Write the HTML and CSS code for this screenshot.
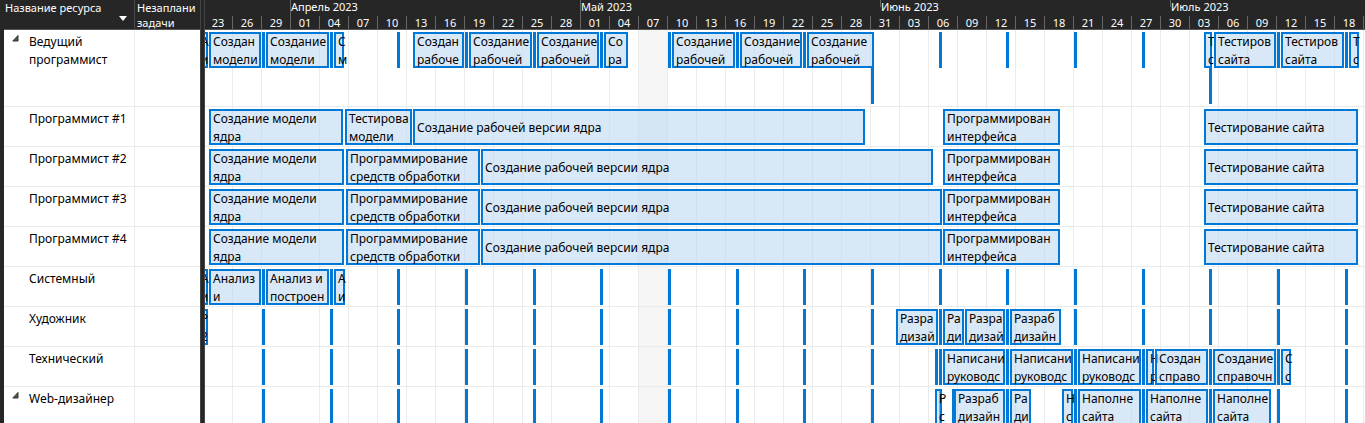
FILE: index.html
```html
<!DOCTYPE html>
<html lang="ru">
<head>
<meta charset="utf-8">
<title>Визуальный оптимизатор ресурсов</title>
<link rel="stylesheet" href="styles.css">
</head>
<body>
<main class="planner">
  <table class="sheet">
    <thead>
      <tr>
        <th class="col-name" scope="col">
          <div class="col-head"><span>Название ресурса</span><button class="sort" type="button" aria-label="Сортировка"><svg viewBox="0 0 8 5"><path d="M0 0h8L4 5z"/></svg></button></div>
        </th>
        <th class="col-free" scope="col"><div class="col-head">Незаплани<br>задачи</div></th>
      </tr>
    </thead>
    <tbody>
      <tr class="tall"><td><button class="toggle" type="button" aria-label="Свернуть"><svg viewBox="0 0 7 7"><path d="M6 .5v5.500H.8z"/></svg></button>Ведущий<br>программист</td><td></td></tr>
      <tr><td>Программист #1</td><td></td></tr>
      <tr><td>Программист #2</td><td></td></tr>
      <tr><td>Программист #3</td><td></td></tr>
      <tr><td>Программист #4</td><td></td></tr>
      <tr><td>Системный</td><td></td></tr>
      <tr><td>Художник</td><td></td></tr>
      <tr><td>Технический</td><td></td></tr>
      <tr><td><button class="toggle" type="button" aria-label="Свернуть"><svg viewBox="0 0 7 7"><path d="M6 .5v5.500H.8z"/></svg></button>Web-дизайнер</td><td></td></tr>
    </tbody>
  </table>
  <div class="splitter"></div>
  <section class="timeline">
    <header class="scale">
      <div class="months"></div>
      <div class="days"></div>
    </header>
    <div class="lanes"><div class="grid"></div></div>
  </section>
</main>
<script src="app.js"></script>
</body>
</html>
```
FILE: styles.css
```css
* { box-sizing: border-box; }

body {
  margin: 0;
  height: 100vh;
  overflow: hidden;
  background: #fff;
  color: #000;
  font: 12px/18px "Noto Sans", sans-serif;
}

button {
  border: 0;
  padding: 0;
  background: none;
  cursor: pointer;
}

button svg { display: block; }

.planner {
  display: flex;
  height: 100%;
  overflow: hidden;
  border-left: 4px solid #262626;
}

/* Resource sheet */
.sheet {
  flex: none;
  align-self: flex-start;
  width: 196px;
  table-layout: fixed;
  border-collapse: separate;
  border-spacing: 0;
}

.sheet th {
  padding: 0 1px;
  background: #262626;
  color: #fff;
  border-bottom: 1px solid #555;
  font-size: 11px;
  font-weight: 400;
  line-height: 15px;
  text-align: left;
  vertical-align: top;
  white-space: nowrap;
}

.sheet .col-name { width: 131px; border-right: 1px solid #4a4a4a; }
.sheet .col-free { padding-left: 2px; }

.col-head {
  display: flow-root;
  height: 29px;
}

.col-name .col-head {
  display: flex;
  justify-content: space-between;
}

.sort {
  align-self: flex-end;
  width: 8px;
  margin: 0 6px 8px 0;
}

.sort svg { width: 8px; height: 5px; fill: #fff; }

.sheet td {
  position: relative;
  height: 40px;
  padding: 3px 0 0 25px;
  border-bottom: 1px solid #ebebeb;
  vertical-align: top;
  white-space: nowrap;
}

.sheet td:first-child { border-right: 1px solid #ebebeb; }
.sheet .tall td { height: 77px; }

.toggle {
  position: absolute;
  top: 5px;
  left: 8px;
}

.toggle svg { width: 7px; height: 7px; fill: #555; stroke: #333; }

.splitter {
  flex: none;
  width: 5px;
  background: #262626;
  border-left: 1px solid #444;
  border-right: 1px solid #444;
  cursor: col-resize;
}

/* Time scale */
.timeline {
  flex: 1;
  min-width: 0;
  overflow: hidden;
}

.scale {
  height: 30px;
  background: #262626;
  color: #fff;
  border-bottom: 1px solid #555;
  font-size: 11px;
}

.months {
  position: relative;
  height: 16px;
}

.month {
  position: absolute;
  top: 0;
  height: 16px;
  line-height: 13px;
  white-space: nowrap;
  border-left: 1px solid #666;
}

.month.offset { height: 7px; }

.days {
  display: flex;
  margin-left: -2px;
}

.day {
  flex: none;
  width: 29px;
  height: 13px;
  border-left: 1px solid #666;
  line-height: 13px;
  text-align: center;
}

/* Assignments */
.lanes { position: relative; }

.grid {
  position: absolute;
  inset: 0;
  display: flex;
  margin-left: -2px;
}

.grid-cell {
  flex: none;
  width: 29px;
  border-left: 1px solid #ebebeb;
}

.grid-cell.current { background: #f5f5f5; }
.grid-cell.month-start { border-left-color: transparent; }

.lane {
  position: relative;
  height: 40px;
  border-bottom: 1px solid #ebebeb;
}

.lane.tall { height: 77px; }

.task, .mark {
  position: absolute;
  top: 2px;
  height: 36px;
}

.task {
  display: flex;
  align-items: center;
  padding: 2px 0 0 2px;
  border: 2px solid #0078d7;
  background: rgba(192, 217, 242, 0.6);
  white-space: nowrap;
}

.mark { width: 3px; background: #0078d7; }
.mark.second { top: 38px; }
```
FILE: app.js
```js
const ORIGIN = 205;
const WEEKS = [262, 330, 397, 465, 533, 600, 668, 736, 803, 871, 939, 1006, 1074, 1142, 1209, 1277, 1345];
const MONTHS = [[290, 'Апрель 2023'], [580, 'Май 2023'], [880, 'Июнь 2023', 'offset'], [1170, 'Июль 2023', 'offset']];
const DAYS = ['23', '26', '29', '01', '04', '07', '10', '13', '16', '19', '22', '25', '28', '01', '04', '07', '10', '13', '16', '19',
  '22', '25', '28', '31', '03', '06', '09', '12', '15', '18', '21', '24', '27', '30', '03', '06', '09', '12', '15', '18', ''];

const UI = [943, 1060, 'Программирован\nинтерфейса'];
const TEST = [1204, 1358, 'Тестирование сайта'];
const CORE = 'Создание модели\nядра';
const BUILD = 'Создание рабочей версии ядра';
const TOOLS = [346, 480, 'Программирование\nсредств обработки'];

// Each task is [start, end, label]; marks are narrow assignments without a label.
const LANES = [
  { tall: true, marks: WEEKS.filter(x => x !== 871 && x !== 1209), second: [871, 1209], tasks: [
    [197, 208, 'А\nи'], [209, 261, 'Создан\nмодели'], [266, 329, 'Создание\nмодели'], [334, 344, 'С\nм'],
    [413, 464, 'Создан\nрабоче'], [469, 532, 'Создание\nрабочей'], [537, 599, 'Создание\nрабочей'], [604, 628, 'Со\nра'],
    [672, 735, 'Создание\nрабочей'], [740, 802, 'Создание\nрабочей'], [807, 874, 'Создание\nрабочей'],
    [1204, 1212, 'Т\nс'], [1214, 1276, 'Тестиров\nсайта'], [1281, 1344, 'Тестиров\nсайта'], [1349, 1359, 'Т\nс']] },
  { marks: [], tasks: [[209, 343, CORE], [345, 412, 'Тестирова\nмодели'], [413, 865, BUILD], UI, TEST] },
  { marks: [], tasks: [[209, 344, CORE], TOOLS, [481, 933, BUILD], UI, TEST] },
  { marks: [], tasks: [[209, 344, CORE], TOOLS, [481, 942, BUILD], UI, TEST] },
  { marks: [], tasks: [[209, 344, CORE], TOOLS, [481, 942, BUILD], UI, TEST] },
  { marks: WEEKS, tasks: [[197, 208, 'А\nи'], [209, 261, 'Анализ\nи'], [266, 329, 'Анализ и\nпостроен'], [334, 345, 'А\nи']] },
  { marks: WEEKS, tasks: [[197, 208, 'Р\n2'], [896, 938, 'Разра\nдизай'], [943, 964, 'Ра\nди'], [965, 1005, 'Разра\nдизай'], [1010, 1061, 'Разраб\nдизайн']] },
  { marks: [...WEEKS, 935], tasks: [
    [943, 1005, 'Написани\nруководс'], [1010, 1073, 'Написани\nруководс'], [1078, 1141, 'Написани\nруководс'], [1146, 1154, 'Н\nр'],
    [1155, 1208, 'Создан\nсправо'], [1213, 1276, 'Создание\nсправочн'], [1281, 1291, 'С\nс']] },
  { marks: [...WEEKS, 952], tasks: [
    [935, 942, 'Р\nс'], [954, 1005, 'Разраб\nдизайн'], [1010, 1031, 'Ра\nди'], [1062, 1073, 'Н\nс'],
    [1078, 1141, 'Наполне\nсайта'], [1146, 1208, 'Наполне\nсайта'], [1213, 1271, 'Наполне\nсайта']] },
];

function add(parent, className, text) {
  const el = document.createElement('div');
  el.className = className;
  if (text) {
    const span = document.createElement('span');
    text.split('\n').forEach((line, i) => {
      if (i) span.append(document.createElement('br'));
      span.append(line);
    });
    el.append(span);
  }
  parent.append(el);
  return el;
}

const months = document.querySelector('.months');
MONTHS.forEach(([x, name, extra]) => {
  add(months, extra ? `month ${extra}` : 'month', name).style.left = `${x - ORIGIN}px`;
});

const days = document.querySelector('.days');
const grid = document.querySelector('.grid');
DAYS.forEach((day, i) => {
  add(days, 'day', day);
  const cell = add(grid, 'grid-cell');
  if (i === 15) cell.classList.add('current');
  if (day === '01') cell.classList.add('month-start');
});

const lanes = document.querySelector('.lanes');
LANES.forEach(data => {
  const lane = add(lanes, data.tall ? 'lane tall' : 'lane');
  data.marks.forEach(x => { add(lane, 'mark').style.left = `${x - ORIGIN}px`; });
  (data.second || []).forEach(x => { add(lane, 'mark second').style.left = `${x - ORIGIN}px`; });
  data.tasks.forEach(([start, end, label]) => {
    const task = add(lane, 'task', label);
    task.style.left = `${start - ORIGIN}px`;
    task.style.width = `${end - start}px`;
  });
});
```
